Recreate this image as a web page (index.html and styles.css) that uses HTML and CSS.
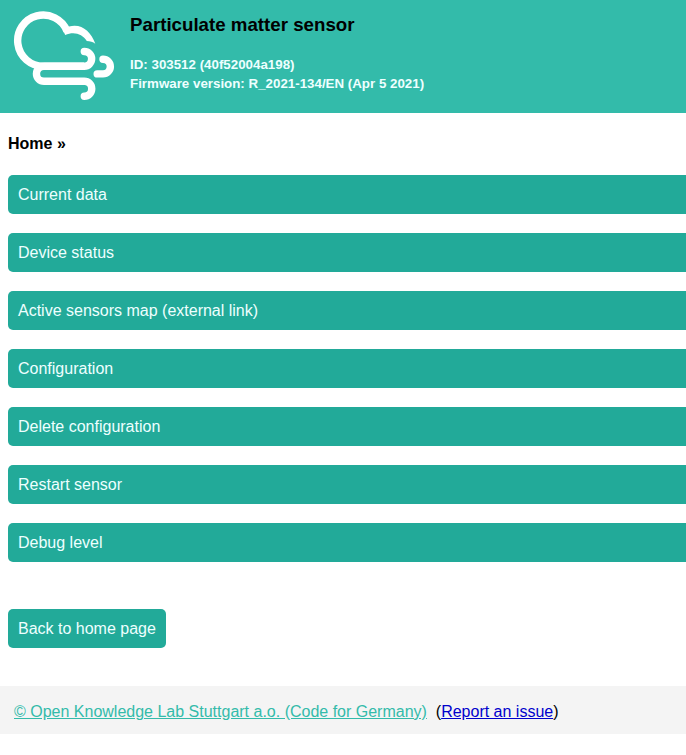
FILE: index.html
```html
<!DOCTYPE html>
<html lang="en">
<head>
<meta charset="utf-8">
<title>Particulate matter sensor</title>
<link rel="stylesheet" href="styles.css">
</head>
<body>
<header class="header">
  <a class="logo" href="#" aria-label="Home">
    <svg width="102" height="92" viewBox="13 10 102 92" fill="none" stroke="#fff" stroke-width="7.4" stroke-linecap="round">
      <path d="M84 66.2H43.5A25.6 25.6 0 1 1 67 31" stroke-linecap="butt"/>
      <path d="M65.2 35L63.6 31.5L66 27L69 26.5C81 23 91 31 95.3 43.8C93 41.8 90 41 86.8 41C82.5 34 74 31 65.2 35Z" fill="#fff" stroke="none"/>
      <path d="M84.3 51.5A7.35 7.35 0 0 1 84.3 66.2H44A7.5 7.5 0 0 0 44 81.3H84.3A7.45 7.45 0 0 1 84.3 96.2"/>
      <path d="M103 59.2A7.35 7.35 0 0 1 103 73.9H97.2"/>
    </svg>
  </a>
  <div class="device">
    <h3 class="title">Particulate matter sensor</h3>
    <p class="info">ID: 303512 (40f52004a198)<br>Firmware version: R_2021-134/EN (Apr 5 2021)</p>
  </div>
</header>
<main class="content">
  <h4 class="breadcrumb">Home »</h4>
  <nav class="menu">
    <a class="button" href="#">Current data</a>
    <a class="button" href="#">Device status</a>
    <a class="button" href="#">Active sensors map (external link)</a>
    <a class="button" href="#">Configuration</a>
    <a class="button" href="#">Delete configuration</a>
    <a class="button" href="#">Restart sensor</a>
    <a class="button" href="#">Debug level</a>
  </nav>
  <a class="button back" href="#">Back to home page</a>
</main>
<footer class="footer"><a class="credit" href="#">© Open Knowledge Lab Stuttgart a.o. (Code for Germany)</a>&nbsp; (<a class="issue" href="#">Report an issue</a>)</footer>
</body>
</html>
```

FILE: styles.css
```css
body {
  margin: 0;
  background: #fff;
  color: #000;
  font: 16px/19px "Liberation Sans", Arial, sans-serif;
  overflow-x: hidden;
}

.header {
  display: flex;
  box-sizing: border-box;
  height: 113px;
  padding: 10px 13px;
  gap: 15px;
  background: #33bbaa;
}

.logo svg {
  display: block;
}

.title {
  margin: 4px 0 20px;
  font-size: 18.72px;
  line-height: 21px;
}

.info {
  margin: 0;
  color: #eff;
  font-size: 13.33px;
  font-weight: bold;
  line-height: 19px;
}

.content {
  padding: 21px 0 38px 8px;
}

.breadcrumb {
  margin: 0 0 22px;
  font-size: 16px;
}

.menu {
  display: flex;
  flex-direction: column;
  gap: 19px;
  margin: 0 -8px 47px 0;
}

.button {
  display: block;
  padding: 10px;
  border-radius: 5px;
  background: #22aa99;
  color: #eff;
  text-decoration: none;
}

.back {
  width: fit-content;
}

.footer {
  padding: 16px 14px 13px;
  background: #f4f4f4;
}

.credit {
  color: #33bbaa;
}

.issue {
  color: #0000cc;
}
```
